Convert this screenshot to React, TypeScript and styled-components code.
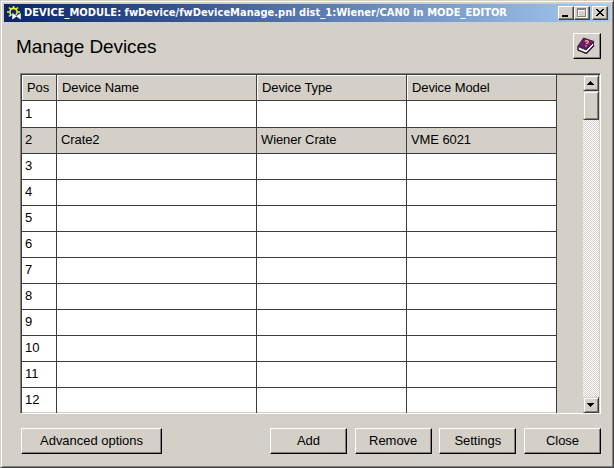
import React from "react";
import styled, { createGlobalStyle, css } from "styled-components";

const FACE = "#d4d0c8";
const LINE = "#403c3e";

const GlobalStyle = createGlobalStyle`
  * { box-sizing: border-box; }
  body { margin: 0; background: ${FACE}; overflow: hidden; }
`;

const raised = css`
  display: flex;
  align-items: center;
  justify-content: center;
  padding: 0;
  background: ${FACE};
  border: 1px solid;
  border-color: #fff #404040 #404040 #fff;
  box-shadow: inset -1px -1px #808080;
`;

const raisedSoft = css`
  ${raised}
  border-color: ${FACE} #404040 #404040 ${FACE};
  box-shadow: inset 1px 1px #fff, inset -1px -1px #808080;
`;

const Window = styled.main`
  width: 614px;
  height: 468px;
  background: ${FACE};
  border: 1px solid;
  border-color: ${FACE} #404040 #404040 ${FACE};
  box-shadow: inset 1px 1px #fff, inset -1px -1px #808080;
  padding: 3px;
  color: #000;
  font-family: "Liberation Sans", Arial, sans-serif;
`;

const TitleBar = styled.header`
  height: 18px;
  display: flex;
  align-items: center;
  padding: 0 2px 0 3px;
  background: linear-gradient(90deg, #0a246a, #a6caf0);
`;

const TitleText = styled.h1`
  margin: 0 0 0 1px;
  flex: 1;
  color: #fff;
  font: bold 11px/18px "DejaVu Sans Condensed", "DejaVu Sans", sans-serif;
  letter-spacing: 0.02px;
  white-space: nowrap;
`;

const CaptionButton = styled.button<{ $gap?: boolean }>`
  ${raised}
  width: 16px;
  height: 14px;
  margin-left: ${(p) => (p.$gap ? 2 : 0)}px;
`;

const Heading = styled.div`
  display: flex;
  justify-content: space-between;
  height: 51px;
  padding: 11px 9px 0 12px;
`;

const HeadingText = styled.h2`
  margin: 0;
  font-weight: normal;
  font-size: 19px;
  line-height: 27px;
  letter-spacing: -0.08px;
`;

const HelpButton = styled.button`
  ${raised}
  border-color: #fff #000 #000 #fff;
  width: 28px;
  height: 26px;
  padding: 0 2px 1px 0;
`;

const TableFrame = styled.section`
  display: flex;
  justify-content: space-between;
  width: 581px;
  height: 341px;
  margin-left: 16px;
  border: 1px solid;
  border-color: #808080 #fff #fff #808080;
  box-shadow: inset 1px 1px ${LINE};
  padding: 1px 1px 0 1px;
`;

const Table = styled.div`
  width: 535px;
`;

const Row = styled.div<{ $selected?: boolean }>`
  display: grid;
  grid-template-columns: 35px 200px 150px 150px;
  height: 26px;
  background: ${(p) => (p.$selected ? FACE : "#fff")};
  &:last-child { height: 25px; }
`;

const Cell = styled.div<{ $indent?: boolean }>`
  border-right: 1px solid ${LINE};
  border-bottom: 1px solid ${LINE};
  padding-left: ${(p) => (p.$indent ? 4 : 3)}px;
  font-size: 13px;
  line-height: 26px;
  letter-spacing: -0.1px;
  white-space: nowrap;
  ${Row}:last-child & { border-bottom: 0; }
`;

const HeaderCell = styled(Cell)`
  background: ${FACE};
  box-shadow: inset 1px 1px #fff;
  padding-left: 5px;
  line-height: 25px;
`;

const ScrollBar = styled.div`
  width: 16px;
  display: flex;
  flex-direction: column;
  background: repeating-conic-gradient(#fff 0 25%, ${FACE} 0 50%) 0 0 / 2px 2px;
`;

const ScrollArrow = styled.button`
  ${raisedSoft}
  width: 16px;
  height: 16px;
  padding-right: 1px;
`;

const ScrollThumb = styled.div`
  ${raisedSoft}
  height: 29px;
  margin-bottom: auto;
`;

const PushButton = styled.button<{ $wide?: boolean }>`
  ${raised}
  border-color: #fff #000 #000 #fff;
  width: ${(p) => (p.$wide ? 141 : 77)}px;
  height: 26px;
  font: 13px/24px "Liberation Sans", Arial, sans-serif;
  letter-spacing: -0.03px;
`;

const ButtonBar = styled.footer`
  display: flex;
  justify-content: space-between;
  width: 580px;
  margin: 14px 0 0 17px;
`;

const ButtonGroup = styled.div`
  display: flex;
  justify-content: space-between;
  width: 331px;
`;

const GearIcon = () => (
  <svg width="16" height="16" viewBox="0 0 16 16">
    <g fill="none" stroke="#f5f535">
      <circle cx="6.5" cy="7" r="3.6" strokeWidth="1.6" />
      <path strokeWidth="1.5" d="M6.5 1v2M0 7h2.5M10.5 7H13M2 2.5l1.8 1.8M11 2.5L9.2 4.3M2 11.5l1.8-1.8M6.5 11v2" />
    </g>
    <path d="M5 7.5l4.5 3.2L14 7.5V15l-4.5-3.2L5 15z" fill="#fff" stroke="#0a246a" strokeWidth=".5" />
  </svg>
);

const BookIcon = () => (
  <svg width="18" height="17" viewBox="0 0 18 17">
    <path d="M1 9.5v3.5l8 3.5 7.5-8V5.5L9 13z" fill="#fff" stroke="#281028" strokeWidth=".8" />
    <path d="M6.5 1L17 4.5 9.5 12.5 1 9z" fill="#6c1c6c" stroke="#30083c" strokeWidth=".8" />
    <path d="M1 9v4l8.5 3.3L17 8.5" fill="none" stroke="#201028" strokeWidth="1.1" />
    <path d="M8 4.6c1.2-1.5 3.9-.6 3.2.8-.5.8-1.8.6-2 1.7M9 8.2v1.2" fill="none" stroke="#f8b070" strokeWidth="1.4" />
  </svg>
);

const Arrow = ({ down = false }: { down?: boolean }) => (
  <svg width="7" height="4" viewBox="0 0 7 4" shapeRendering="crispEdges">
    <path d={down ? "M0 0h7v1H6v1H5v1H4v1H3V3H2V2H1V1H0z" : "M3 0h1v1h1v1h1v1h1v1H0V3h1V2h1V1h1z"} />
  </svg>
);

const CaptionGlyph = ({ d, shadow }: { d: string; shadow?: boolean }) => (
  <svg width="14" height="12" viewBox="0 0 14 12" shapeRendering="crispEdges">
    {shadow && <path d={d} fill="#fff" fillRule="evenodd" transform="translate(1 1)" />}
    <path d={d} fill={shadow ? "#808080" : "#000"} fillRule="evenodd" />
  </svg>
);

const devices: Record<number, string[]> = { 2: ["Crate2", "Wiener Crate", "VME 6021"] };
const positions = Array.from({ length: 12 }, (_, i) => i + 1);

export default function App() {
  return (
    <>
      <GlobalStyle />
      <Window>
        <TitleBar>
          <GearIcon />
          <TitleText>DEVICE_MODULE: fwDevice/fwDeviceManage.pnl dist_1:Wiener/CAN0 in MODE_EDITOR</TitleText>
          <CaptionButton aria-label="Minimize"><CaptionGlyph d="M3 8h6v2H3z" /></CaptionButton>
          <CaptionButton aria-label="Maximize">
            <CaptionGlyph shadow d="M2 1h9v9H2zM3 3v6h7V3z" />
          </CaptionButton>
          <CaptionButton $gap aria-label="Close">
            <CaptionGlyph d="M3 2h2v1h1v1h2V3h1V2h2v1h-1v1H9v1H8v1h1v1h1v1h1v1H9V8H8V7H6v1H5v1H3V8h1V7h1V6h1V5H5V4H4V3H3z" />
          </CaptionButton>
        </TitleBar>
        <Heading>
          <HeadingText>Manage Devices</HeadingText>
          <HelpButton aria-label="Help"><BookIcon /></HelpButton>
        </Heading>
        <TableFrame>
          <Table>
            <Row>
              {["Pos", "Device Name", "Device Type", "Device Model"].map((h) => (
                <HeaderCell key={h}>{h}</HeaderCell>
              ))}
            </Row>
            {positions.map((n) => (
              <Row key={n} $selected={n in devices}>
                <Cell>{n}</Cell>
                {[0, 1, 2].map((c) => (
                  <Cell key={c} $indent>{devices[n]?.[c]}</Cell>
                ))}
              </Row>
            ))}
          </Table>
          <ScrollBar>
            <ScrollArrow aria-label="Scroll up"><Arrow /></ScrollArrow>
            <ScrollThumb />
            <ScrollArrow aria-label="Scroll down"><Arrow down /></ScrollArrow>
          </ScrollBar>
        </TableFrame>
        <ButtonBar>
          <PushButton $wide>Advanced options</PushButton>
          <ButtonGroup>
            <PushButton>Add</PushButton>
            <PushButton>Remove</PushButton>
            <PushButton>Settings</PushButton>
            <PushButton>Close</PushButton>
          </ButtonGroup>
        </ButtonBar>
      </Window>
    </>
  );
}
